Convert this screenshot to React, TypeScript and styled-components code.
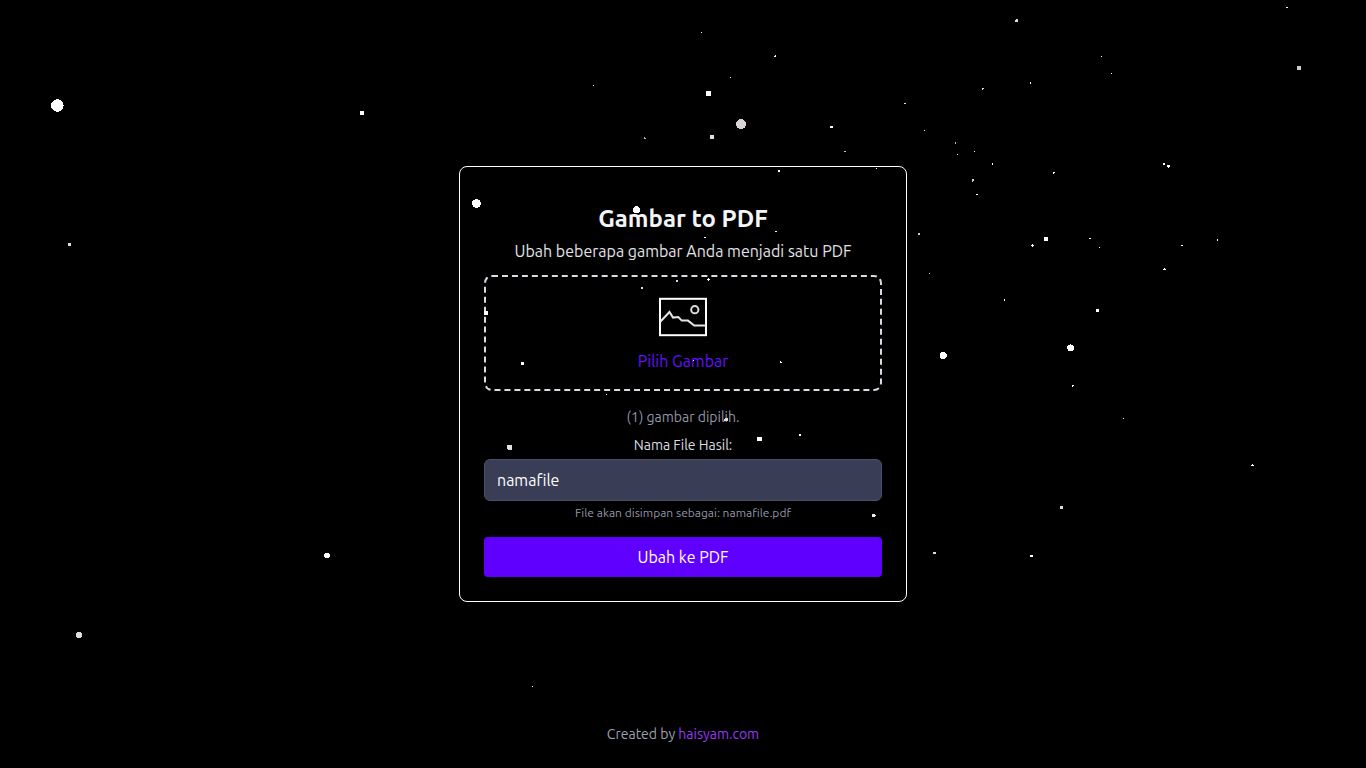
import React, { useState } from "react";
import styled, { createGlobalStyle } from "styled-components";

const GlobalStyle = createGlobalStyle`
  *, *::before, *::after { box-sizing: border-box; }
  body {
    margin: 0;
    background: #000;
    color: #fff;
    font-family: Ubuntu, "Noto Sans", sans-serif;
    font-size: 16px;
    line-height: 24px;
  }
`;

const Page = styled.div`
  display: grid;
  grid-template-rows: 1fr auto 1fr;
  justify-items: center;
  min-height: 100vh;
`;

const Card = styled.main`
  grid-row: 2;
  width: 100%;
  max-width: 448px;
  padding: 24px;
  border: 1px solid #fff;
  border-radius: 8px;
  text-align: center;
`;

const Title = styled.h1`
  margin: 12px 0 4px;
  font-size: 24px;
  line-height: 32px;
  font-weight: 700;
  color: #f3f4f6;
`;

const Subtitle = styled.p`
  margin: 0 0 12px;
  color: #e2e3e8;
`;

const DropZone = styled.label`
  display: flex;
  flex-direction: column;
  align-items: center;
  gap: 8px;
  padding: 16px;
  border: 2px dashed #d8dbe4;
  border-radius: 8px;
  color: #6610ff;
  cursor: pointer;
`;

const FileInput = styled.input`
  position: absolute;
  width: 1px;
  height: 1px;
  opacity: 0;
`;

const Count = styled.p`
  margin: 16px 0 8px;
  font-size: 14px;
  line-height: 20px;
  color: #9395a8;
`;

const FieldLabel = styled.label`
  display: block;
  margin-bottom: 4px;
  font-size: 14px;
  line-height: 20px;
  color: #dcdde2;
`;

const TextInput = styled.input`
  display: block;
  width: 100%;
  padding: 8px 12px;
  border: 1px solid #4b5066;
  border-radius: 6px;
  background: #3a3d56;
  color: #fff;
  font: inherit;
  outline: none;
`;

const Hint = styled.p`
  margin: 4px 0 16px;
  font-size: 12px;
  line-height: 16px;
  color: #9395a8;
`;

const SubmitButton = styled.button`
  display: block;
  width: 100%;
  padding: 8px 16px;
  border: 0;
  border-radius: 4px;
  background: #5f00ff;
  color: #fff;
  font: inherit;
  cursor: pointer;
`;

const Footer = styled.footer`
  grid-row: 3;
  align-self: end;
  padding: 24px;
  font-size: 14px;
  line-height: 20px;
  color: #9ca0b0;
`;

const FooterLink = styled.a`
  color: #9a3af8;
  text-decoration: none;
`;

const Sky = styled.svg`
  position: fixed;
  inset: 0;
  width: 100%;
  height: 100%;
  pointer-events: none;
`;

type NearStar = [cx: number, cy: number, r: number, shade?: string];
type FarStar = [x: number, y: number, width: number, height: number, shade?: string];

const nearStars: NearStar[] = [
  [57.3, 105.5, 6.3], [327, 555.5, 2.9], [79, 635.2, 3, "#ddd"], [741, 124.2, 5, "#d8d4d4"],
  [476.5, 203.5, 4.5], [636.5, 209.5, 3.5], [943.2, 355.5, 3.5], [1070.6, 347.8, 3.4],
  [708.5, 93.5, 2.8], [362, 113, 2.1], [759.5, 439, 2.5], [1046, 239, 2.2], [486, 313, 2.2],
];

const farStars: FarStar[] = [
  [68, 243, 3, 3, "#ddd"], [532, 686, 1, 1], [593, 85, 1, 1], [701, 32, 1, 1],
  [774, 56, 2, 1], [775, 55, 1, 1], [730, 77, 1, 1], [710, 135, 4, 4, "#e4dcdc"],
  [644, 137, 1, 2, "#bbb"], [645, 138, 1, 1, "#bbb"], [830, 126, 3, 2], [844, 151, 2, 1, "#ccc"],
  [904, 103, 2, 1, "#ddd"], [1015, 20, 3, 2, "#ddd"], [1016, 19, 2, 1, "#ddd"],
  [1286, 7, 2, 1], [1297, 66, 4, 4, "#ccc"], [1101, 56, 1, 1], [1111, 73, 1, 1],
  [1030, 82, 1, 2], [982, 88, 2, 1, "#ddd"], [982, 89, 1, 1, "#ddd"], [924, 130, 1, 1],
  [955, 142, 1, 2, "#bbb"], [957, 154, 1, 1], [974, 151, 1, 1], [992, 163, 1, 2],
  [972, 179, 2, 2, "#ccc"], [972, 181, 1, 1, "#ccc"], [976, 194, 2, 1], [1053, 172, 2, 1],
  [1053, 173, 1, 1], [1163, 163, 2, 2], [1167, 165, 3, 2], [1168, 167, 1, 1],
  [876, 168, 1, 1], [778, 170, 2, 2], [775, 231, 2, 1], [704, 237, 2, 1],
  [918, 233, 2, 2, "#ccc"], [929, 273, 1, 1, "#bbb"], [1031, 245, 3, 1], [1032, 244, 1, 3],
  [1089, 238, 2, 1], [1099, 247, 1, 1], [1181, 245, 2, 1], [1217, 239, 1, 2],
  [1163, 269, 3, 1], [1164, 268, 1, 1], [1004, 299, 1, 2], [1096, 309, 3, 3],
  [1072, 385, 2, 1], [1072, 386, 1, 1], [1123, 418, 1, 1], [1251, 465, 3, 1],
  [1252, 464, 1, 1], [641, 287, 2, 2, "#ddd"], [676, 280, 2, 2, "#ddd"], [707, 279, 3, 1],
  [708, 278, 1, 3], [521, 362, 3, 3], [693, 360, 1, 1], [780, 361, 1, 2], [781, 362, 1, 1],
  [606, 394, 1, 1], [725, 418, 3, 3, "#ddd"], [724, 419, 1, 2, "#ddd"], [799, 434, 2, 2],
  [507, 445, 5, 4, "#e2e0e0"], [508, 449, 4, 1, "#e2d8d8"], [872, 514, 3, 3, "#eee"],
  [875, 515, 1, 1, "#eee"], [1060, 506, 3, 3, "#ddd"], [933, 552, 3, 2, "#ddd"],
  [1030, 555, 3, 2],
];

function StarField() {
  return (
    <Sky viewBox="0 0 1366 768" preserveAspectRatio="xMidYMid slice" shapeRendering="crispEdges" aria-hidden="true">
      {farStars.map(([x, y, width, height, shade = "#fff"]) => (
        <rect key={`${x}-${y}`} x={x} y={y} width={width} height={height} fill={shade} />
      ))}
      {nearStars.map(([cx, cy, r, shade = "#fff"]) => (
        <circle key={`${cx}-${cy}`} cx={cx} cy={cy} r={r} fill={shade} />
      ))}
    </Sky>
  );
}

function PictureIcon() {
  return (
    <svg width="48" height="48" viewBox="0 0 48 48" fill="none" stroke="#fff" strokeWidth="2" aria-hidden="true">
      <rect x="1" y="5.8" width="46" height="36.4" />
      <circle cx="35.8" cy="16.7" r="3.6" stroke="#ddd" />
      <path d="M1.5 28.5 10.5 19 14 24.6 19.3 24 22.8 27.6H29L35.2 32.5H46.5" stroke="#e4e4e4" />
    </svg>
  );
}

export default function App() {
  const [name, setName] = useState("namafile");
  const [count, setCount] = useState(1);

  return (
    <>
      <GlobalStyle />
      <Page>
        <Card>
          <Title>Gambar to PDF</Title>
          <Subtitle>Ubah beberapa gambar Anda menjadi satu PDF</Subtitle>
          <DropZone htmlFor="images">
            <PictureIcon />
            Pilih Gambar
            <FileInput
              id="images"
              type="file"
              accept="image/*"
              multiple
              onChange={(e) => setCount(e.target.files?.length ?? 0)}
            />
          </DropZone>
          <Count>{`(${count}) gambar dipilih.`}</Count>
          <FieldLabel htmlFor="filename">Nama File Hasil:</FieldLabel>
          <TextInput id="filename" type="text" value={name} onChange={(e) => setName(e.target.value)} />
          <Hint>{`File akan disimpan sebagai: ${name}.pdf`}</Hint>
          <SubmitButton type="button">Ubah ke PDF</SubmitButton>
        </Card>
        <Footer>
          Created by <FooterLink href="https://haisyam.com">haisyam.com</FooterLink>
        </Footer>
      </Page>
      <StarField />
    </>
  );
}
